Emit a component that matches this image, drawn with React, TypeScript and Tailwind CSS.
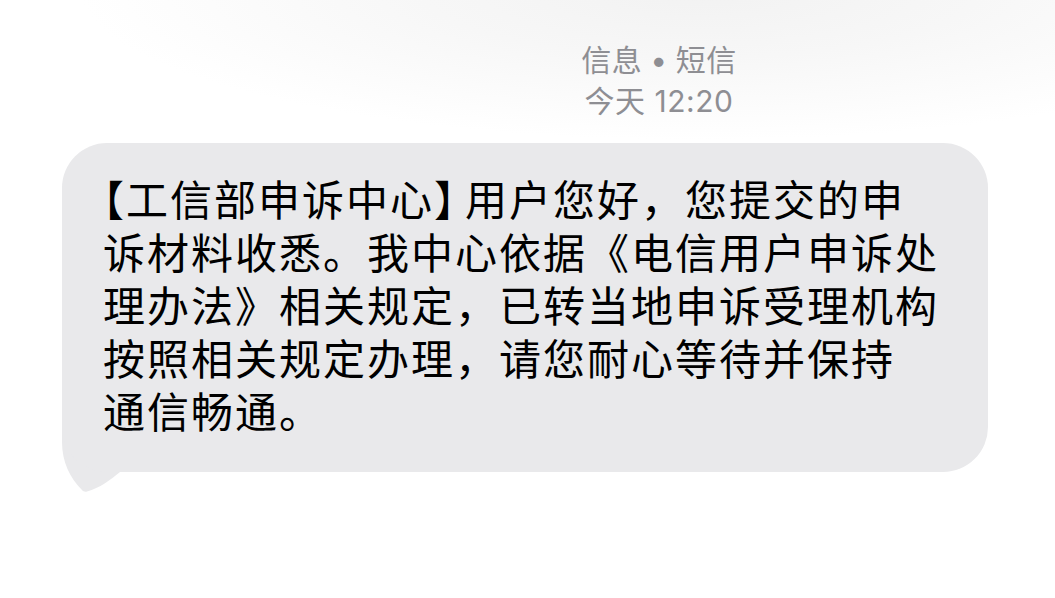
import React from 'react';

// 【】 use half-width alternates, as on the phone
const Half = ({ children, className = '' }: { children: React.ReactNode; className?: string }) => (
  <span className={"[font-feature-settings:'halt'] " + className}>{children}</span>
);

export default function App() {
  return (
    <div className="w-[1055px] h-[598px] overflow-hidden bg-white bg-[radial-gradient(ellipse_620px_150px_at_700px_-10px,#f2f2f2_0%,#f7f7f7_45%,#ffffff_100%)] font-['Noto_Sans_CJK_SC',sans-serif]">
      {/* Header */}
      <div className="pt-[40px] pl-[263px] flex flex-col items-center text-[#8e8e93] text-[30px] leading-[41px] tracking-[0.5px] font-['Inter','Noto_Sans_CJK_SC',sans-serif]">
        <div>
          信息<span className="mx-[8px]">•</span>短信
        </div>
        <div>今天 12:20</div>
      </div>

      {/* Message bubble */}
      <div className="mt-[21px] ml-[62px] relative w-[926px]">
        <svg
          className="absolute left-0 bottom-[-20px]"
          width="80"
          height="72"
          viewBox="0 0 80 72"
        >
          <path
            d="M0 0 L0 22 C0 42 8 58 20 70 C21 71.5 23 72 25 71.5 C38 68 48 60 58 52 L80 52 L80 0 Z"
            fill="#e9e9eb"
          />
        </svg>
        <div className="relative bg-[#e9e9eb] rounded-[45px] pl-[41px] pt-[28px] pb-[36px] text-black text-[42px] leading-[53px] tracking-[2px]">
          <div className="whitespace-nowrap">
            <Half>【</Half>工信部申诉中心<Half className="mr-[8px]">】</Half>用户您好，您提交的申
          </div>
          <div className="whitespace-nowrap">诉材料收悉。我中心依据《电信用户申诉处</div>
          <div className="whitespace-nowrap">理办法》相关规定，已转当地申诉受理机构</div>
          <div className="whitespace-nowrap">按照相关规定办理，请您耐心等待并保持</div>
          <div className="whitespace-nowrap">通信畅通。</div>
        </div>
      </div>
    </div>
  );
}
